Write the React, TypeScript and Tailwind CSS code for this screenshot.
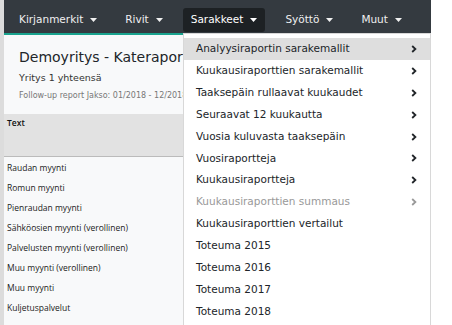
import React from "react";

const NAV = ["Kirjanmerkit", "Rivit", "Sarakkeet", "Syöttö", "Muut"];

const MENU: { label: string; sub?: boolean; disabled?: boolean; active?: boolean }[] = [
  { label: "Analyysiraportin sarakemallit", sub: true, active: true },
  { label: "Kuukausiraporttien sarakemallit", sub: true },
  { label: "Taaksepäin rullaavat kuukaudet", sub: true },
  { label: "Seuraavat 12 kuukautta", sub: true },
  { label: "Vuosia kuluvasta taaksepäin", sub: true },
  { label: "Vuosiraportteja", sub: true },
  { label: "Kuukausiraportteja", sub: true },
  { label: "Kuukausiraporttien summaus", sub: true, disabled: true },
  { label: "Kuukausiraporttien vertailut" },
  { label: "Toteuma 2015" },
  { label: "Toteuma 2016" },
  { label: "Toteuma 2017" },
  { label: "Toteuma 2018" },
];

const ROWS = [
  "Raudan myynti",
  "Romun myynti",
  "Pienraudan myynti",
  "Sähköosien myynti (verollinen)",
  "Palvelusten myynti (verollinen)",
  "Muu myynti (verollinen)",
  "Muu myynti",
  "Kuljetuspalvelut",
];

function Caret() {
  return (
    <svg width="7" height="4" viewBox="0 0 7 4" className="ml-[7px]">
      <path d="M0 0h7L3.5 4z" fill="currentColor" />
    </svg>
  );
}

function Chevron() {
  return (
    <svg width="6" height="8" viewBox="0 0 6 8">
      <path d="M1.2 1 4.4 4 1.2 7" fill="none" stroke="currentColor" strokeWidth="1.8" />
    </svg>
  );
}

export default function App() {
  return (
    <div className="relative w-[452px] h-[325px] overflow-hidden bg-white" style={{ fontFamily: '"DejaVu Sans", Verdana, sans-serif' }}>
      <div className="flex h-full w-[431px] border-l-4 border-[#dcdcdc] flex-col">
        {/* navbar */}
        <div className="h-[33px] bg-[#343a40] flex items-center pl-[7px] shrink-0">
          {NAV.map((n) => (
            <div
              key={n}
              className={
                "flex items-center h-[24px] px-[8px] mr-[12px] mt-[6px] rounded-[3px] text-[10.5px] " +
                (n === "Sarakkeet" ? "bg-[#1d2124] text-white" : "text-[#f0f0f0]")
              }
            >
              {n}
              <Caret />
            </div>
          ))}
        </div>
        <div className="h-[2px] bg-[#19a38e] shrink-0" />
        {/* report panel */}
        <div className="flex-1 bg-[#f8f9fa]">
          <div className="h-[79px] pl-[15px] pt-[12px]">
            <div className="text-[14px] text-[#212529] leading-[20px] whitespace-nowrap">Demoyritys - Kateraportti</div>
            <div className="text-[9.5px] text-[#333] mt-[4px] leading-[14px]">Yritys 1 yhteensä</div>
            <div className="text-[8px] text-[#777] mt-[5px] leading-[12px] whitespace-nowrap">Follow-up report Jakso: 01/2018 - 12/2018</div>
          </div>
          <div className="h-[43px] bg-[#e2e2e2] pl-[3px] pt-[3px] border-b border-[#bbb]" style={{ fontFamily: '"Open Sans", sans-serif' }}>
            <div className="text-[8.5px] font-semibold text-[#111]">Text</div>
          </div>
          <div className="pl-[3px]" style={{ fontFamily: '"Open Sans", sans-serif' }}>
            {ROWS.map((r) => (
              <div key={r} className="h-[20px] flex items-center text-[8.5px] text-[#222] pt-[3px]">
                {r}
              </div>
            ))}
          </div>
        </div>
      </div>
      {/* dropdown */}
      <div className="absolute left-[183px] top-[33px] w-[248px] h-[300px] bg-white border border-[#d8d8d8] pt-[4px]">
        {MENU.map((m) => (
          <div
            key={m.label}
            className={
              "h-[21.9px] flex items-center justify-between pl-[12px] pr-[13px] text-[10.5px] " +
              (m.active ? "bg-[#dedede] " : "") +
              (m.disabled ? "text-[#999]" : "text-[#212529]")
            }
          >
            <span>{m.label}</span>
            {m.sub && <Chevron />}
          </div>
        ))}
      </div>
    </div>
  );
}
